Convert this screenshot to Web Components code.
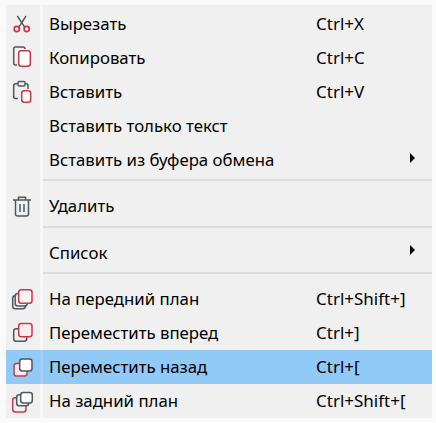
<!DOCTYPE html>
<html>
<head>
<meta charset="utf-8">
<style>
  html, body { margin: 0; padding: 0; background: #fafafa; }
  body { width: 436px; height: 423px; overflow: hidden; font-family: "Noto Sans", "Open Sans", sans-serif; }
</style>
</head>
<body>
<script>
(function() {
    const GREY = '#4d575e';
    const RED = '#c9384a';
    const rect = (x, y, w, h, stroke, fill, r) =>
        `<rect x="${x}" y="${y}" width="${w}" height="${h}" rx="${r || 2.5}" fill="${fill || 'none'}" stroke="${stroke}" stroke-width="1.5"/>`;

    const ICONS = {
        cut: `<path d="M7.3 4 L14.5 14.8 M16 4 L9 14.8" fill="none" stroke="${GREY}" stroke-width="1.4"/>
              <circle cx="6.8" cy="17" r="2.6" fill="none" stroke="${RED}" stroke-width="1.7"/>
              <circle cx="16.7" cy="17" r="2.6" fill="none" stroke="${RED}" stroke-width="1.7"/>`,
        copy: `<path d="M7 19 H5.5 Q3.7 19 3.7 17 V3 Q3.7 1 5.5 1 H13 Q15 1 15 3" fill="none" stroke="${GREY}" stroke-width="1.5"/>
               ${rect(8.7, 4.7, 11.6, 15.6, RED, '#fff')}`,
        paste: `<path d="M8 18.5 H5.5 Q3.7 18.5 3.7 16.5 V5.5 Q3.7 3.7 5.5 3.7 H16 Q18 3.7 18 5.5 V9" fill="none" stroke="${GREY}" stroke-width="1.5"/>
                <rect x="8" y="1.5" width="7" height="4.5" rx="1" fill="#f0f0f0" stroke="${GREY}" stroke-width="1.4"/>
                ${rect(11.7, 10.7, 9, 11.6, RED, '#fff')}`,
        trash: `<path d="M3 6 H21 M8.5 6 V3.2 H15.5 V6" fill="none" stroke="${GREY}" stroke-width="1.5"/>
                <path d="M5.5 6 V20 Q5.5 22 7.5 22 H16.5 Q18.5 22 18.5 20 V6" fill="none" stroke="${GREY}" stroke-width="1.5"/>
                <path d="M10 10 V18 M14 10 V18" fill="none" stroke="${GREY}" stroke-width="1.5"/>`,
        front: `${rect(2.7, 8.7, 12.6, 13, GREY)}${rect(5.2, 6.5, 12, 12.5, GREY, '#f0f0f0')}${rect(8.7, 2.7, 13.3, 13.6, RED, '#fdf4f5')}`,
        forward: `${rect(3.7, 7.7, 13, 12.6, GREY)}${rect(8.7, 2.4, 13.3, 13.3, RED, '#fbeef0')}`,
        backward: `${rect(4, 8.4, 13, 12.6, RED, '#fdeef0')}${rect(9.7, 4, 12.3, 12, GREY, '#fff')}`,
        back: `${rect(2.7, 8.7, 13.3, 14.3, RED)}${rect(6.7, 5.7, 12, 11, GREY, '#f0f0f0')}${rect(10.7, 3.4, 11.6, 10.6, GREY, '#fff')}`
    };

    const itemTemplate = document.createElement('template');
    itemTemplate.innerHTML = `
      <style>
        :host { display: block; }
        .row {
            display: flex;
            align-items: center;
            height: 34px;
            color: #000;
            font-size: 16.8px;
        }
        :host([selected]) .row {
            background: linear-gradient(to right, #91c9f7 34px, #a0d0f8 34px, #a0d0f8 37px, #91c9f7 37px);
        }
        .icon {
            display: flex;
            flex: none;
            align-items: center;
            justify-content: center;
            box-sizing: border-box;
            width: 34px;
            height: 100%;
            padding-right: 2px;
        }
        .icon svg { width: 24px; height: 24px; }
        .label { flex: 1; margin-left: 9px; padding-bottom: 1px; white-space: nowrap; }
        .shortcut { flex: none; width: 94px; padding-bottom: 1px; white-space: nowrap; font-size: 17px; }
        .arrow { flex: none; width: 22px; display: flex; align-items: center; margin-bottom: 5px; }
        .arrow i {
            display: block; width: 0; height: 0;
            border-style: solid;
            border-width: 5px 0 5px 5px;
            border-color: transparent transparent transparent #000;
        }
      </style>
      <div class="row">
        <div class="icon"></div>
        <div class="label"><slot></slot></div>
        <div class="shortcut"></div>
        <div class="arrow"></div>
      </div>
    `;

    class CtxItem extends HTMLElement {
        constructor() {
            super();
            this._shadowRoot = this.attachShadow({ mode: 'open' });
            this._shadowRoot.appendChild(itemTemplate.content.cloneNode(true));
        }

        connectedCallback() {
            const icon = this.getAttribute('icon');
            if (icon) {
                this._shadowRoot.querySelector('.icon').innerHTML =
                    `<svg viewBox="0 0 24 24">${ICONS[icon]}</svg>`;
            }
            this._shadowRoot.querySelector('.shortcut').textContent = this.getAttribute('shortcut') || '';
            if (this.hasAttribute('submenu')) {
                this._shadowRoot.querySelector('.arrow').innerHTML = '<i></i>';
            }
        }
    }

    const sepTemplate = document.createElement('template');
    sepTemplate.innerHTML = `
      <style>
        :host { display: block; box-sizing: border-box; height: 12.33px; padding: 2.33px 0 0 37px; }
        div { height: 2px; background: #dcdcdc; }
      </style>
      <div></div>
    `;

    class CtxSeparator extends HTMLElement {
        constructor() {
            super();
            this.attachShadow({ mode: 'open' }).appendChild(sepTemplate.content.cloneNode(true));
        }
    }

    const menuTemplate = document.createElement('template');
    menuTemplate.innerHTML = `
      <style>
        :host {
            display: block;
            width: 426px;
            height: 413px;
            box-sizing: border-box;
            margin: 5px 4px 0 6px;
            padding-top: 2px;
            background: linear-gradient(to right, #f0f0f0 34px, #f7f7f7 34px, #f7f7f7 37px, #f0f0f0 37px);
        }
      </style>
      <slot></slot>
    `;

    class CtxMenu extends HTMLElement {
        constructor() {
            super();
            this.attachShadow({ mode: 'open' }).appendChild(menuTemplate.content.cloneNode(true));
        }
    }

    window.customElements.define('ctx-item', CtxItem);
    window.customElements.define('ctx-separator', CtxSeparator);
    window.customElements.define('ctx-menu', CtxMenu);
})();
</script>

<ctx-menu>
  <ctx-item icon="cut" shortcut="Ctrl+X">Вырезать</ctx-item>
  <ctx-item icon="copy" shortcut="Ctrl+C">Копировать</ctx-item>
  <ctx-item icon="paste" shortcut="Ctrl+V">Вставить</ctx-item>
  <ctx-item>Вставить только текст</ctx-item>
  <ctx-item submenu>Вставить из буфера обмена</ctx-item>
  <ctx-separator></ctx-separator>
  <ctx-item icon="trash">Удалить</ctx-item>
  <ctx-separator></ctx-separator>
  <ctx-item submenu>Список</ctx-item>
  <ctx-separator></ctx-separator>
  <ctx-item icon="front" shortcut="Ctrl+Shift+]">На передний план</ctx-item>
  <ctx-item icon="forward" shortcut="Ctrl+]">Переместить вперед</ctx-item>
  <ctx-item icon="backward" shortcut="Ctrl+[" selected>Переместить назад</ctx-item>
  <ctx-item icon="back" shortcut="Ctrl+Shift+[">На задний план</ctx-item>
</ctx-menu>
</body>
</html>
